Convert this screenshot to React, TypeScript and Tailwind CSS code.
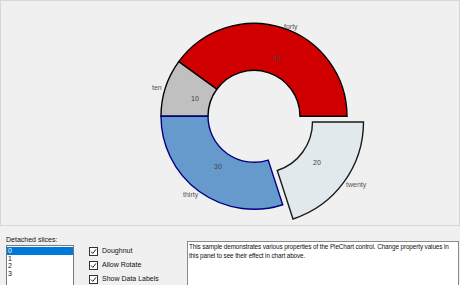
type Slice = {
  label: string;
  value: number;
  from: number;
  to: number;
  fill: string;
  stroke: string;
  cx: number;
  cy: number;
  outer: number;
  inner: number;
};

const slices: Slice[] = [
  { label: "forty", value: 40, from: 0, to: 144, fill: "#d00000", stroke: "#000000", cx: 254, cy: 116.3, outer: 93, inner: 46 },
  { label: "ten", value: 10, from: 144, to: 180, fill: "#c0c0c0", stroke: "#000000", cx: 254, cy: 116.3, outer: 93, inner: 46 },
  { label: "thirty", value: 30, from: 180, to: 288, fill: "#6699cc", stroke: "#000080", cx: 254, cy: 116.3, outer: 93, inner: 46 },
  { label: "twenty", value: 20, from: 288, to: 360, fill: "#e1e9ec", stroke: "#1a1a1a", cx: 261.5, cy: 122, outer: 102, inner: 51 },
];

const labels = [
  { text: "forty", x: 284, y: 29 },
  { text: "ten", x: 152, y: 90 },
  { text: "thirty", x: 183, y: 197 },
  { text: "twenty", x: 346, y: 187 },
];

const values = [
  { text: "40", x: 273, y: 61 },
  { text: "10", x: 191, y: 101 },
  { text: "30", x: 214, y: 169 },
  { text: "20", x: 313, y: 165 },
];

function pt(cx: number, cy: number, r: number, deg: number) {
  const a = (deg * Math.PI) / 180;
  return `${(cx + r * Math.cos(a)).toFixed(2)} ${(cy - r * Math.sin(a)).toFixed(2)}`;
}

function slicePath(s: Slice) {
  const large = s.to - s.from > 180 ? 1 : 0;
  return [
    `M ${pt(s.cx, s.cy, s.outer, s.from)}`,
    `A ${s.outer} ${s.outer} 0 ${large} 0 ${pt(s.cx, s.cy, s.outer, s.to)}`,
    `L ${pt(s.cx, s.cy, s.inner, s.to)}`,
    `A ${s.inner} ${s.inner} 0 ${large} 1 ${pt(s.cx, s.cy, s.inner, s.from)}`,
    "Z",
  ].join(" ");
}

function Check({ label }: { label: string }) {
  return (
    <div className="flex h-[14px] items-center gap-[4px]">
      <div className="flex h-[9px] w-[9px] items-center justify-center border border-[#333] bg-white">
        <svg width="7" height="7" viewBox="0 0 7 7">
          <path d="M1 3.6 L2.8 5.4 L6 1.4" fill="none" stroke="#222" strokeWidth="1" />
        </svg>
      </div>
      <span className="text-[7px] text-[#111]">{label}</span>
    </div>
  );
}

export default function App() {
  return (
    <div className="flex h-[285px] w-[460px] flex-col overflow-hidden bg-[#f0f0f0] font-['Liberation_Sans',Arial,sans-serif]">
      <div className="h-[226px] shrink-0 border border-[#d7d7d7] bg-[#f0f0f0]">
        <svg width="458" height="224" viewBox="1 1 458 224" className="block">
          {slices.map((s) => (
            <path key={s.label} d={slicePath(s)} fill={s.fill} stroke={s.stroke} strokeWidth="1.4" />
          ))}
          {labels.map((l) => (
            <text key={l.text} x={l.x} y={l.y} fontSize="7" fill="#555" fontFamily="Liberation Sans, Arial, sans-serif">
              {l.text}
            </text>
          ))}
          {values.map((v) => (
            <text key={v.text} x={v.x} y={v.y} fontSize="7" fill="#444" fontFamily="Liberation Sans, Arial, sans-serif">
              {v.text}
            </text>
          ))}
        </svg>
      </div>
      <div className="flex flex-1">
        <div className="ml-[6px] flex w-[68px] flex-col">
          <span className="mt-[8px] h-[11px] text-[7px] leading-[11px] text-[#111]">Detached slices:</span>
          <div className="flex-1 border border-[#7a7a7a] bg-white pt-[1px] text-[7px] leading-[7.5px] text-[#111]">
            <div className="bg-[#0078d7] pl-[1px] text-white">0</div>
            <div className="pl-[1px]">1</div>
            <div className="pl-[1px]">2</div>
            <div className="pl-[1px]">3</div>
          </div>
        </div>
        <div className="ml-[15px] mt-[18px] flex flex-col">
          <Check label="Doughnut" />
          <Check label="Allow Rotate" />
          <Check label="Show Data Labels" />
        </div>
        <div className="ml-auto mr-[1px] mt-[15px] w-[272px] border border-[#8a8a8a] bg-white px-[1px] pt-[1px] text-[6.4px] leading-[8.5px] tracking-[-0.12px] text-[#111]">
          This sample demonstrates various properties of the PieChart control. Change property values in this panel to see their effect in chart above.
        </div>
      </div>
    </div>
  );
}
